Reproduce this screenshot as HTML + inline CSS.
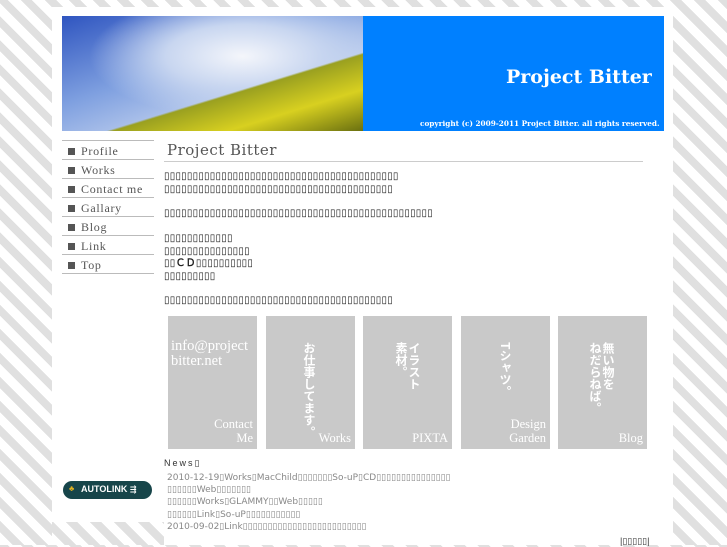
<!DOCTYPE html>
<html><head><meta charset="utf-8"><style>
*{margin:0;padding:0;box-sizing:border-box}
body{width:727px;height:545px;overflow:hidden;position:relative;background:repeating-linear-gradient(45deg,#fff 0,#fff 9px,#e0e0e0 9px,#e0e0e0 17px);font-family:"Liberation Sans","DejaVu Sans",sans-serif}
.a{position:absolute}
.t{font-family:"DejaVu Sans",sans-serif;color:#222;font-size:10px;font-weight:bold;letter-spacing:0.22px;white-space:nowrap}
.nav div{height:19px;border-top:1px solid #bbb;font-family:"Liberation Serif",serif;font-size:12px;color:#555;padding:3px 0 0 6px;letter-spacing:.7px}
.nav div:before{content:"";display:inline-block;width:7px;height:7px;background:#555;margin-right:6px}
.box{position:absolute;top:316px;width:89px;height:133px;background:#c9c9c9;color:#fff;font-family:"Liberation Serif",serif;font-size:12.5px}
.box .b{position:absolute;right:4px;bottom:4px;text-align:right;line-height:14px}
.v{position:absolute;top:26px;writing-mode:vertical-rl;font-family:"Noto Sans CJK JP",sans-serif;font-weight:bold;font-size:12px;line-height:13px}
.n{font-family:"DejaVu Sans",sans-serif;font-size:9px;color:#888;white-space:nowrap;line-height:12.2px}
</style></head><body>
<div class="a" style="left:52px;top:7px;width:621px;height:538px;background:#fff"></div>
<div class="a" style="left:52px;top:522px;width:112px;height:23px;background:repeating-linear-gradient(45deg,#fff 0,#fff 9px,#e0e0e0 9px,#e0e0e0 17px)"></div>
<div class="a" style="left:62px;top:16px;width:301px;height:115px;background:radial-gradient(ellipse at 60% 35%,#f4f6fb 0%,#c8d6f0 30%,transparent 60%),linear-gradient(160deg,#2f55c0 0%,#7fa0e0 40%,#c0d0ee 70%)"></div>
<div class="a" style="left:62px;top:16px;width:301px;height:115px;background:linear-gradient(163deg,transparent 62%,#9aa020 63%,#d8d020 80%,#6a7010 100%)"></div>
<div class="a" style="left:363px;top:16px;width:301px;height:115px;background:#0080ff"></div>
<div class="a" style="left:506px;top:66px;color:#fff;font-family:'DejaVu Serif',serif;font-weight:bold;font-size:19px;white-space:nowrap">Project Bitter</div>
<div class="a" style="left:420px;top:119px;color:#fff;font-family:'DejaVu Serif',serif;font-weight:bold;font-size:7.3px;white-space:nowrap">copyright (c) 2009-2011 Project Bitter. all rights reserved.</div>
<div class="a nav" style="left:62px;top:140px;width:92px;border-bottom:1px solid #bbb">
<div>Profile</div><div>Works</div><div>Contact me</div><div>Gallary</div><div>Blog</div><div>Link</div><div>Top</div></div>
<div class="a" style="left:167px;top:141px;font-family:'DejaVu Serif',serif;font-size:15px;color:#555;letter-spacing:.5px">Project Bitter</div>
<div class="a" style="left:164px;top:161px;width:479px;border-top:1px solid #ccc"></div>
<div class="a t" style="left:164px;top:171px;line-height:12.5px">▯▯▯▯▯▯▯▯▯▯▯▯▯▯▯▯▯▯▯▯▯▯▯▯▯▯▯▯▯▯▯▯▯▯▯▯▯▯▯▯▯<br>▯▯▯▯▯▯▯▯▯▯▯▯▯▯▯▯▯▯▯▯▯▯▯▯▯▯▯▯▯▯▯▯▯▯▯▯▯▯▯▯</div>
<div class="a t" style="left:164px;top:208px">▯▯▯▯▯▯▯▯▯▯▯▯▯▯▯▯▯▯▯▯▯▯▯▯▯▯▯▯▯▯▯▯▯▯▯▯▯▯▯▯▯▯▯▯▯▯▯</div>
<div class="a t" style="left:164px;top:233px;line-height:12.5px">▯▯▯▯▯▯▯▯▯▯▯▯<br>▯▯▯▯▯▯▯▯▯▯▯▯▯▯▯<br>▯▯ＣＤ▯▯▯▯▯▯▯▯▯▯<br>▯▯▯▯▯▯▯▯▯</div>
<div class="a t" style="left:164px;top:295px">▯▯▯▯▯▯▯▯▯▯▯▯▯▯▯▯▯▯▯▯▯▯▯▯▯▯▯▯▯▯▯▯▯▯▯▯▯▯▯▯</div>
<div class="box" style="left:168px"><div style="position:absolute;left:3px;top:23px;font-size:14.5px;line-height:15px">info@project<br>bitter.net</div><div class="b">Contact<br>Me</div></div>
<div class="box" style="left:266px"><div class="v" style="left:37px">お仕事してます。</div><div class="b">Works</div></div>
<div class="box" style="left:363px"><div class="v" style="left:32px">イラスト<br>素材。</div><div class="b">PIXTA</div></div>
<div class="box" style="left:461px"><div class="v" style="left:38px">Tシャツ。</div><div class="b">Design<br>Garden</div></div>
<div class="box" style="left:558px"><div class="v" style="left:31px">無い物を<br>ねだらねば。</div><div class="b">Blog</div></div>
<div class="a" style="left:164px;top:458px;font-size:9px;color:#333;letter-spacing:2px">News▯</div>
<div class="a n" style="left:167px;top:472px">2010-12-19▯Works▯MacChild▯▯▯▯▯▯▯So-uP▯CD▯▯▯▯▯▯▯▯▯▯▯▯▯▯▯<br>▯▯▯▯▯▯Web▯▯▯▯▯▯▯<br>▯▯▯▯▯▯Works▯GLAMMY▯▯Web▯▯▯▯▯<br>▯▯▯▯▯▯Link▯So-uP▯▯▯▯▯▯▯▯▯▯▯<br>2010-09-02▯Link▯▯▯▯▯▯▯▯▯▯▯▯▯▯▯▯▯▯▯▯▯▯▯▯▯</div>
<div class="a" style="left:63px;top:481px;width:89px;height:18px;border-radius:9px;background:#17454a;color:#fff;font-size:9px;font-weight:bold;padding:3px 0 0 18px"><span style="position:absolute;left:6px;top:3px;color:#e0b020;font-size:8px">♣</span>AUTOLINK <span style="font-size:8px">⇶</span></div>
<div class="a" style="left:620px;top:536px;font-size:9px;color:#333">|▯▯▯▯▯|</div>
</body></html>
